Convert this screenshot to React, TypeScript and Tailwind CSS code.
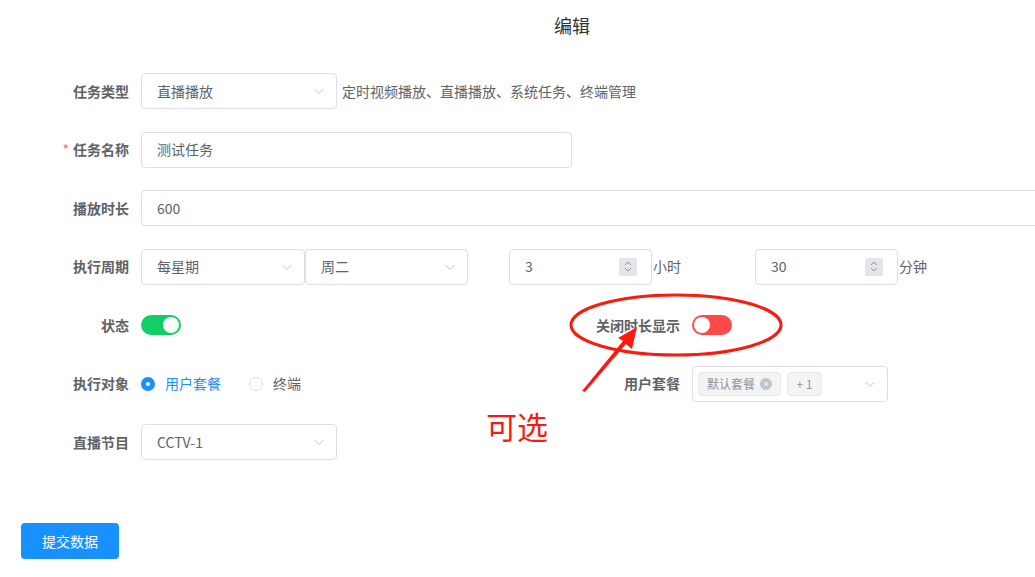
import React from 'react';

const font = { fontFamily: '"Noto Sans CJK SC", "Noto Sans", sans-serif' };

const Chevron: React.FC = () => (
  <svg width="12" height="12" viewBox="0 0 12 12" fill="none" aria-hidden="true">
    <path d="M1.5 4 L6 8.5 L10.5 4" stroke="#c0c4cc" strokeWidth="1" />
  </svg>
);

const Select: React.FC<{ value: string; width: string }> = ({ value, width }) => (
  <div
    className={`${width} h-[36px] border border-[#dcdfe6] rounded-[4px] flex items-center justify-between pl-[15px] pr-[11px] text-[14px] text-[#606266] bg-white`}
  >
    <span>{value}</span>
    <Chevron />
  </div>
);

const Spinner: React.FC = () => (
  <div className="w-[18px] h-[18px] bg-[#e4e4ea] rounded-[2px] flex flex-col items-center justify-center gap-[1px]">
    <svg width="8" height="5" viewBox="0 0 8 5" fill="none">
      <path d="M1 4 L4 1 L7 4" stroke="#909399" strokeWidth="1" />
    </svg>
    <svg width="8" height="5" viewBox="0 0 8 5" fill="none">
      <path d="M1 1 L4 4 L7 1" stroke="#909399" strokeWidth="1" />
    </svg>
  </div>
);

const NumberInput: React.FC<{ value: string }> = ({ value }) => (
  <div className="w-[143px] h-[36px] border border-[#dcdfe6] rounded-[4px] flex items-center justify-between pl-[15px] pr-[14px] text-[14px] text-[#606266]">
    <span>{value}</span>
    <Spinner />
  </div>
);

const Label: React.FC<{ text: string; required?: boolean; width?: string }> = ({
  text,
  required,
  width = 'w-[129px]',
}) => (
  <div className={`${width} shrink-0 text-right text-[14px] font-bold text-[#606266] mr-[12px]`}>
    {required && <span className="text-[#f56c6c] mr-[4px] font-normal">*</span>}
    {text}
  </div>
);

const Switch: React.FC<{ on: boolean; color: string }> = ({ on, color }) => (
  <div
    className={`w-[40px] h-[20px] rounded-full flex items-center px-[2px] ${color} ${
      on ? 'justify-end' : 'justify-start'
    }`}
  >
    <div className="w-[16px] h-[16px] rounded-full bg-white" />
  </div>
);

export default function App() {
  return (
    <div className="relative w-full h-[577px] overflow-hidden bg-white" style={font}>
      {/* Title */}
      <div className="pt-[12px] pl-[554px] text-[18px] text-[#303133] leading-[26px]">编辑</div>

      {/* Form */}
      <div className="mt-[35px] flex flex-col gap-[22.5px]">
        {/* 任务类型 */}
        <div className="flex items-center h-[36px]">
          <Label text="任务类型" />
          <Select value="直播播放" width="w-[196px]" />
          <span className="ml-[5px] text-[14px] text-[#606266]">定时视频播放、直播播放、系统任务、终端管理</span>
        </div>

        {/* 任务名称 */}
        <div className="flex items-center h-[36px]">
          <Label text="任务名称" required />
          <div className="w-[431px] h-[36px] border border-[#dcdfe6] rounded-[4px] flex items-center pl-[15px] text-[14px] text-[#606266]">
            测试任务
          </div>
        </div>

        {/* 播放时长 */}
        <div className="flex items-center h-[36px]">
          <Label text="播放时长" />
          <div className="w-[960px] shrink-0 h-[36px] border border-[#dcdfe6] rounded-[4px] flex items-center pl-[15px] text-[14px] text-[#606266]">
            600
          </div>
        </div>

        {/* 执行周期 */}
        <div className="flex items-center h-[36px]">
          <Label text="执行周期" />
          <Select value="每星期" width="w-[164px]" />
          <Select value="周二" width="w-[163px]" />
          <div className="ml-[41px]">
            <NumberInput value="3" />
          </div>
          <span className="ml-[1px] text-[14px] text-[#606266] w-[102px]">小时</span>
          <NumberInput value="30" />
          <span className="ml-[1px] text-[14px] text-[#606266]">分钟</span>
        </div>

        {/* 状态 / 关闭时长显示 */}
        <div className="flex items-center h-[36px]">
          <Label text="状态" />
          <Switch on color="bg-[#13ce66]" />
          <div className="ml-[379px] flex items-center">
            <Label text="关闭时长显示" width="w-[120px]" />
            <Switch on={false} color="bg-[#ff4949]" />
          </div>
        </div>

        {/* 执行对象 / 用户套餐 */}
        <div className="flex items-center h-[36px]">
          <Label text="执行对象" />
          <div className="flex items-center w-[419px]">
            <div className="w-[14px] h-[14px] rounded-full bg-[#1890ff] flex items-center justify-center">
              <div className="w-[4px] h-[4px] rounded-full bg-white" />
            </div>
            <span className="ml-[10px] text-[14px] text-[#1890ff]">用户套餐</span>
            <div className="ml-[28px] w-[14px] h-[14px] rounded-full border border-[#dcdfe6] bg-white" />
            <span className="ml-[10px] text-[14px] text-[#606266]">终端</span>
          </div>
          <Label text="用户套餐" width="w-[120px]" />
          <div className="w-[196px] h-[36px] border border-[#dcdfe6] rounded-[4px] flex items-center pl-[5px] pr-[11px] justify-between">
            <div className="flex items-center gap-[6px]">
              <div className="h-[24px] px-[8px] bg-[#f4f4f5] border border-[#e9e9eb] rounded-[4px] flex items-center text-[12px] text-[#909399]">
                默认套餐
                <span className="ml-[5px] w-[12px] h-[12px] rounded-full bg-[#c0c4cc] flex items-center justify-center">
                  <svg width="6" height="6" viewBox="0 0 6 6">
                    <path d="M1 1 L5 5 M5 1 L1 5" stroke="#ffffff" strokeWidth="1" />
                  </svg>
                </span>
              </div>
              <div className="h-[24px] w-[35px] bg-[#f4f4f5] border border-[#e9e9eb] rounded-[4px] flex items-center justify-center text-[12px] text-[#909399]">
                + 1
              </div>
            </div>
            <Chevron />
          </div>
        </div>

        {/* 直播节目 */}
        <div className="flex items-center h-[36px]">
          <Label text="直播节目" />
          <Select value="CCTV-1" width="w-[196px]" />
        </div>
      </div>

      {/* Submit */}
      <div className="mt-[63px] pl-[21px]">
        <button className="w-[98px] h-[36px] bg-[#1890ff] rounded-[4px] text-white text-[14px]">提交数据</button>
      </div>

      {/* Annotation overlay */}
      <svg className="absolute left-0 top-0 pointer-events-none" width="1035" height="577" aria-hidden="true">
        <ellipse cx="676" cy="325" rx="105" ry="30" fill="none" stroke="#fb1a0e" strokeWidth="3" />
        <polygon points="582,391 585,392 626,344 632,349 637,327 618,338 623,341" fill="#fb1a0e" />
      </svg>
      <div className="absolute left-[486px] top-[410px] text-[31px] text-[#fb1a0e] leading-none">可选</div>
    </div>
  );
}
